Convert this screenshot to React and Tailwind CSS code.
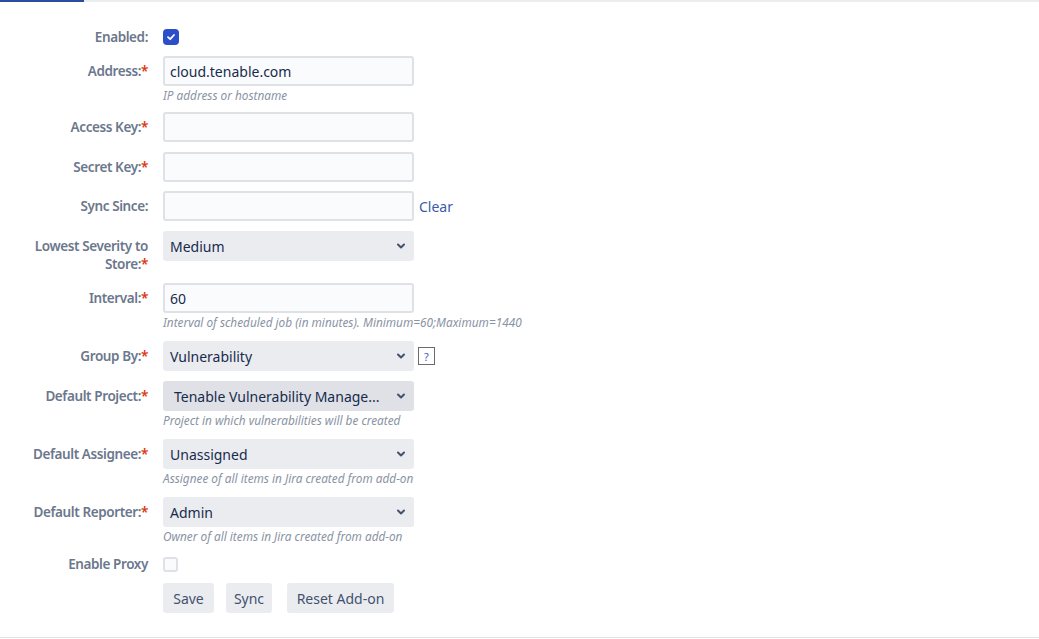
import React from "react";

const Chevron = () => (
  <svg width="10" height="10" viewBox="0 0 10 10" className="shrink-0">
    <path d="M2 3.5 L5 6.5 L8 3.5" fill="none" stroke="#42526e" strokeWidth="2" strokeLinecap="round" strokeLinejoin="round" />
  </svg>
);

const Label = ({ text, required, className = "" }) => (
  <div className={`w-[148px] shrink-0 text-right text-[13.5px] font-semibold leading-[18px] tracking-[-0.4px] text-[#6b778c] ${className}`}>
    {text}
    {required && <span className="text-[#de350b]">*</span>}
  </div>
);

const Help = ({ children }) => (
  <div className="mt-[2px] text-[11.8px] italic leading-[14px] text-[#8993a4]">{children}</div>
);

const TextInput = ({ value = "" }) => (
  <div className="flex h-[30px] w-[251px] items-center rounded-[3px] border-2 border-[#dfe1e6] bg-[#fafbfc] px-[5px] text-[14px] text-[#172b4d]">
    {value}
  </div>
);

const Select = ({ value, dark }) => (
  <div
    className={`flex h-[30px] w-[251px] items-center justify-between rounded-[3px] pr-[8px] text-[14px] text-[#172b4d] ${
      dark ? "bg-[#dfe1e6] pl-[11px]" : "bg-[#ebecf0] pl-[7px]"
    }`}
  >
    <span>{value}</span>
    <Chevron />
  </div>
);

const Row = ({ label, required, mt, children, labelClass = "pt-[6px]" }) => (
  <div className="flex" style={{ marginTop: mt }}>
    <Label text={label} required={required} className={labelClass} />
    <div className="ml-[15px]">{children}</div>
  </div>
);

export default function App() {
  return (
    <div className="flex h-[638px] flex-col border-b border-[#dfe1e6] bg-white font-['Noto_Sans','Open_Sans',sans-serif]">
      {/* tab strip */}
      <div className="flex h-[2px] bg-[#ebecf0]">
        <div className="h-[2px] w-[84px] bg-[#2a4ba0]" />
      </div>

      <div>
        {/* Enabled */}
        <div className="mt-[26px] flex items-center">
          <Label text="Enabled:" />
          <div className="ml-[15px] flex h-[16px] w-[16px] items-center justify-center rounded-[4px] bg-[#2b4fcb]">
            <svg width="10" height="10" viewBox="0 0 10 10">
              <path d="M2 5.2 L4.2 7.2 L8 3" fill="none" stroke="white" strokeWidth="1.8" strokeLinecap="round" strokeLinejoin="round" />
            </svg>
          </div>
        </div>

        <Row label="Address:" required mt="10px">
          <TextInput value="cloud.tenable.com" />
          <Help>IP address or hostname</Help>
        </Row>

        <Row label="Access Key:" required mt="10px">
          <TextInput />
        </Row>

        <Row label="Secret Key:" required mt="10px">
          <TextInput />
        </Row>

        <Row label="Sync Since:" mt="9px">
          <div className="flex items-center">
            <TextInput />
            <a className="ml-[5px] text-[14px] text-[#3b5ba9]">Clear</a>
          </div>
        </Row>

        <Row label="Lowest Severity to Store:" required mt="10px">
          <Select value="Medium" />
        </Row>

        <Row label="Interval:" required mt="10px">
          <TextInput value="60" />
          <Help>Interval of scheduled job (in minutes). Minimum=60;Maximum=1440</Help>
        </Row>

        <Row label="Group By:" required mt="12px">
          <div className="flex items-center">
            <Select value="Vulnerability" />
            <div className="ml-[4px] flex h-[18px] w-[17px] items-center justify-center border border-[#6b6b6b] text-[11px] leading-none text-[#4a5bb5]">
              ?
            </div>
          </div>
        </Row>

        <Row label="Default Project:" required mt="10px">
          <Select value="Tenable Vulnerability Manage..." dark />
          <Help>Project in which vulnerabilities will be created</Help>
        </Row>

        <Row label="Default Assignee:" required mt="12px">
          <Select value="Unassigned" />
          <Help>Assignee of all items in Jira created from add-on</Help>
        </Row>

        <Row label="Default Reporter:" required mt="12px">
          <Select value="Admin" />
          <Help>Owner of all items in Jira created from add-on</Help>
        </Row>

        {/* Enable Proxy */}
        <div className="mt-[12px] flex items-center">
          <Label text="Enable Proxy" />
          <div className="ml-[15px] h-[15px] w-[15px] rounded-[3px] border-2 border-[#dfe1e6] bg-[#fafbfc]" />
        </div>

        {/* Buttons */}
        <div className="mt-[10px] flex pl-[163px] text-[14px] text-[#42526e]">
          <button className="h-[30px] w-[51px] rounded-[3px] bg-[#ebecf0]">Save</button>
          <button className="ml-[12px] h-[30px] w-[46px] rounded-[3px] bg-[#ebecf0]">Sync</button>
          <button className="ml-[15px] h-[30px] w-[107px] rounded-[3px] bg-[#ebecf0]">Reset Add-on</button>
        </div>
      </div>
    </div>
  );
}
